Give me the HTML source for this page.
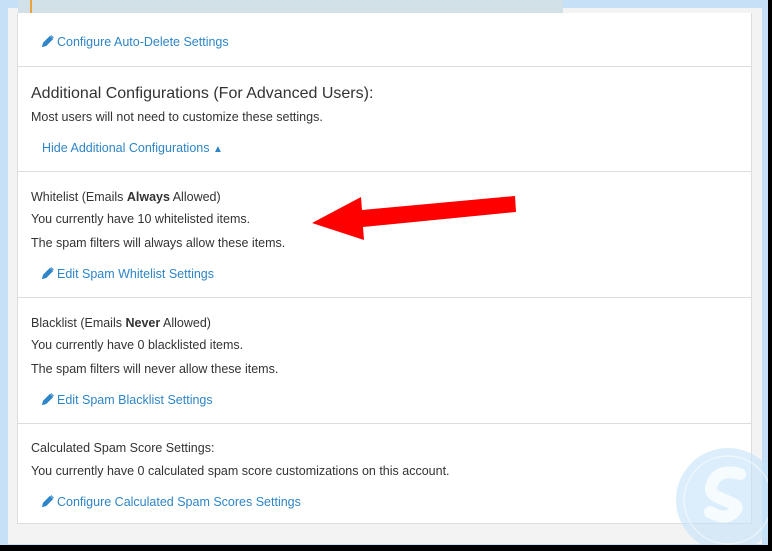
<!DOCTYPE html>
<html><head><style>
body{margin:0;width:772px;height:551px;background:#c6e0f8;position:relative;overflow:hidden;font-family:"Liberation Sans",sans-serif;font-size:12.5px;color:#333}
.panel{position:absolute;left:8px;top:8px;width:754px;height:536px;background:#f3f3f3}
.card{position:absolute;left:17px;top:8px;width:733px;height:515px;background:#fff;border:1px solid #ddd;border-top:none}
.sec{position:absolute;left:0;width:733px;border-top:1px solid #ddd}
.t{position:absolute;left:13px;white-space:nowrap}
a{color:#2e85c8;text-decoration:none}
.pen{display:inline-block;width:12px;height:12px;vertical-align:-1px;margin-right:3px}
</style></head><body>
<div class="panel"></div>
<div style="position:absolute;left:18px;top:0;width:545px;height:13px;background:#d2e1e8"></div>
<div style="position:absolute;left:30px;top:0;width:2px;height:13px;background:#e8a33a"></div>
<div class="card" style="top:13px;height:510px">
 <div class="t" style="top:22px;left:24px"><a><svg class="pen" viewBox="0 0 12 12"><path d="M0.5 11.5l1-3.5 6.5-6.5 2.5 2.5-6.5 6.5z M9 0.5l2.5 2.5" fill="#2e85c8" stroke="#2e85c8"/></svg>Configure Auto-Delete Settings</a></div>
 <div class="sec" style="top:53px;height:105px">
  <div class="t" style="top:18px;font-size:16px;color:#333">Additional Configurations (For Advanced Users):</div>
  <div class="t" style="top:43px">Most users will not need to customize these settings.</div>
  <div class="t" style="top:74px;left:24px"><a>Hide Additional Configurations <span style="font-size:10px">&#9650;</span></a></div>
 </div>
 <div class="sec" style="top:158px">
  <div class="t" style="top:18px">Whitelist (Emails <b>Always</b> Allowed)</div>
  <div class="t" style="top:40px">You currently have 10 whitelisted items.</div>
  <div class="t" style="top:64px">The spam filters will always allow these items.</div>
  <div class="t" style="top:95px;left:24px"><a><svg class="pen" viewBox="0 0 12 12"><path d="M0.5 11.5l1-3.5 6.5-6.5 2.5 2.5-6.5 6.5z M9 0.5l2.5 2.5" fill="#2e85c8" stroke="#2e85c8"/></svg>Edit Spam Whitelist Settings</a></div>
 </div>
 <div class="sec" style="top:284px">
  <div class="t" style="top:18px">Blacklist (Emails <b>Never</b> Allowed)</div>
  <div class="t" style="top:40px">You currently have 0 blacklisted items.</div>
  <div class="t" style="top:64px">The spam filters will never allow these items.</div>
  <div class="t" style="top:95px;left:24px"><a><svg class="pen" viewBox="0 0 12 12"><path d="M0.5 11.5l1-3.5 6.5-6.5 2.5 2.5-6.5 6.5z M9 0.5l2.5 2.5" fill="#2e85c8" stroke="#2e85c8"/></svg>Edit Spam Blacklist Settings</a></div>
 </div>
 <div class="sec" style="top:410px">
  <div class="t" style="top:17px">Calculated Spam Score Settings:</div>
  <div class="t" style="top:40px">You currently have 0 calculated spam score customizations on this account.</div>
  <div class="t" style="top:71px;left:24px"><a><svg class="pen" viewBox="0 0 12 12"><path d="M0.5 11.5l1-3.5 6.5-6.5 2.5 2.5-6.5 6.5z M9 0.5l2.5 2.5" fill="#2e85c8" stroke="#2e85c8"/></svg>Configure Calculated Spam Scores Settings</a></div>
 </div>
</div>
<svg style="position:absolute;left:0;top:0" width="772" height="551">
 <polygon points="312,223 361,197 362,210 515,196 516,212 363,227 364,240" fill="#ff0000"/>
 <circle cx="728" cy="500" r="52" fill="#c4e2f8" opacity="0.6"/>
 <circle cx="728" cy="500" r="44" fill="none" stroke="#fff" stroke-width="1.2" opacity="0.6"/>
 <path d="M740 474 q-22 -6 -28 10 q-4 10 8 14 l14 6 q6 4 -2 10 q-8 6 -22 -2" fill="none" stroke="#fff" stroke-width="12" stroke-linecap="round" opacity="0.75"/>
 <rect x="768" y="0" width="4" height="551" fill="#000"/>
 <rect x="0" y="545" width="772" height="6" fill="#000"/>
</svg>
</body></html>
